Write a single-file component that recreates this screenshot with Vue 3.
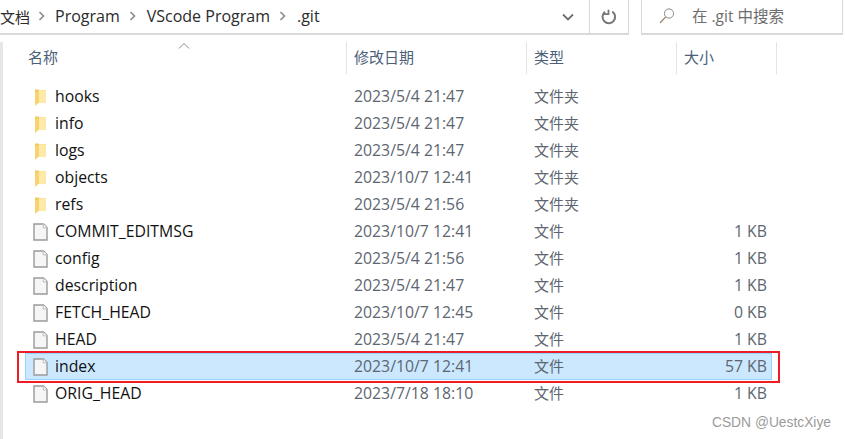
<script setup>
const rows = [
  { n: 'hooks', d: '2023/5/4 21:47', t: '文件夹', s: '', f: 1 },
  { n: 'info', d: '2023/5/4 21:47', t: '文件夹', s: '', f: 1 },
  { n: 'logs', d: '2023/5/4 21:47', t: '文件夹', s: '', f: 1 },
  { n: 'objects', d: '2023/10/7 12:41', t: '文件夹', s: '', f: 1 },
  { n: 'refs', d: '2023/5/4 21:56', t: '文件夹', s: '', f: 1 },
  { n: 'COMMIT_EDITMSG', d: '2023/10/7 12:41', t: '文件', s: '1 KB' },
  { n: 'config', d: '2023/5/4 21:56', t: '文件', s: '1 KB' },
  { n: 'description', d: '2023/5/4 21:47', t: '文件', s: '1 KB' },
  { n: 'FETCH_HEAD', d: '2023/10/7 12:45', t: '文件', s: '0 KB' },
  { n: 'HEAD', d: '2023/5/4 21:47', t: '文件', s: '1 KB' },
  { n: 'index', d: '2023/10/7 12:41', t: '文件', s: '57 KB', sel: 1 },
  { n: 'ORIG_HEAD', d: '2023/7/18 18:10', t: '文件', s: '1 KB' },
]
const crumbs = ['Program', 'VScode Program', '.git']
</script>

<template>
  <div class="win">
    <div class="top">
      <div class="addr">
        <div class="crumbs">
          <span class="first">文档</span>
          <template v-for="c in crumbs" :key="c">
            <svg class="chev" width="8" height="10" viewBox="0 0 8 10"><path d="M1.5 1l4 4-4 4" fill="none" stroke="#8a8a8a" stroke-width="1.6"/></svg>
            <span>{{ c }}</span>
          </template>
        </div>
        <div class="drop">
          <svg width="12" height="8" viewBox="0 0 12 8"><path d="M1 1.5l5 5 5-5" fill="none" stroke="#6d6d6d" stroke-width="1.8"/></svg>
        </div>
        <div class="refresh">
          <svg width="16" height="16" viewBox="0 0 16 16"><path d="M11.2 2.6A6.3 6.3 0 1 1 4 2.9" fill="none" stroke="#777" stroke-width="2"/><path d="M3 .6h4.4v4.6" fill="none" stroke="#777" stroke-width="1.8" transform="rotate(90 5.2 2.9)"/></svg>
        </div>
      </div>
      <div class="search">
        <svg width="16" height="16" viewBox="0 0 16 16"><circle cx="10" cy="5.5" r="4.6" fill="none" stroke="#8a8a8a" stroke-width="1"/><path d="M6.6 9L1 15" fill="none" stroke="#a08a6a" stroke-width="1.2"/></svg>
        <span>在 .git 中搜索</span>
      </div>
    </div>

    <div class="body">
      <div class="head">
        <div class="hc name">名称<svg class="sort" width="12" height="6" viewBox="0 0 12 6"><path d="M1 5.5l5-5 5 5" fill="none" stroke="#8a8a8a" stroke-width="1"/></svg></div>
        <div class="hc">修改日期</div>
        <div class="hc">类型</div>
        <div class="hc">大小</div>
      </div>
      <div class="list">
        <div v-for="r in rows" :key="r.n" class="row" :class="{ sel: r.sel }">
          <div class="icon">
            <svg v-if="r.f" width="13" height="18" viewBox="0 0 13 18">
              <path d="M1 2h11v13H1z" fill="#fbe39a"/>
              <path d="M1 1.5h3.6l.5 1V13l-4 .8L1 14z" fill="#f2c95f"/>
              <path d="M1 4.5L5 3v11.5L1.5 17.5H1z" fill="#f7d46f"/>
              <path d="M5 3h7v12H5z" fill="#fdeaa8"/>
            </svg>
            <svg v-else width="15" height="18" viewBox="0 0 15 18">
              <path d="M1 1h9.5L14 4.5V17H1z" fill="#f6f6f6" stroke="#9a9a9a" stroke-width="1.4"/>
              <path d="M10.2 1v3.8H14" fill="#fff" stroke="#b8b8b8"/>
            </svg>
          </div>
          <div class="n">{{ r.n }}</div>
          <div class="d">{{ r.d }}</div>
          <div class="t">{{ r.t }}</div>
          <div class="s">{{ r.s }}</div>
          <div v-if="r.sel" class="mark"></div>
        </div>
      </div>
    </div>
    <div class="wm">CSDN @UestcXiye</div>
  </div>
</template>

<style scoped>
.win {
  position: relative;
  width: 845px;
  height: 439px;
  background: #fff;
  overflow: hidden;
  font-family: "Open Sans", "Noto Sans CJK SC", sans-serif;
  font-size: 15.8px;
  color: #1a1a1a;
}
.top {
  display: flex;
  height: 35px;
  gap: 12px;
  padding-right: 2px;
}
.addr {
  display: flex;
  align-items: center;
  width: 629px;
  border-right: 1px solid #d9d9d9;
  border-bottom: 2px solid #d9d9d9;
  box-sizing: border-box;
}
.crumbs {
  flex: 1;
  display: flex;
  align-items: center;
  gap: 9.5px;
  font-size: 16px;
  color: #2b2b2b;
  height: 30px;
  margin-top: -1px;
}
.first { font-size: 15px; width: 28px; white-space: nowrap; }
.drop {
  width: 40px;
  height: 33px;
  display: flex;
  align-items: center;
  justify-content: center;
  box-sizing: border-box;
  padding-right: 4px;
  border-right: 1px solid #d9d9d9;
}
.refresh {
  width: 38px;
  height: 33px;
  display: flex;
  align-items: center;
  justify-content: center;
}
.search {
  flex: 1;
  display: flex;
  align-items: center;
  gap: 17px;
  padding-left: 17px;
  padding-bottom: 2px;
  border-left: 1px solid #d9d9d9;
  border-right: 1px solid #d9d9d9;
  border-bottom: 2px solid #d9d9d9;
  color: #6d6d6d;
  font-size: 15.5px;
  box-sizing: border-box;
}
.body {
  margin-top: 7px;
  height: 397px;
  border-left: 3px solid #e6e6e6;
  box-sizing: border-box;
}
.head {
  display: grid;
  grid-template-columns: 344px 180px 150px 100px;
  height: 32px;
  margin-bottom: 9px;
}
.hc {
  position: relative;
  display: flex;
  align-items: center;
  padding-left: 7px;
  padding-bottom: 3px;
  border-right: 1px solid #e3e3e3;
  color: #4c607a;
  font-size: 15px;
  box-sizing: border-box;
}
.name { padding-left: 25px; }
.sort { position: absolute; left: 175px; top: 1px; }
.list { padding-left: 22px; width: 747px; }
.row {
  position: relative;
  display: grid;
  grid-template-columns: 30px 299px 180px 150px 88px;
  align-items: center;
  height: 27px;
  line-height: 25px;
}
.icon { display: flex; justify-content: center; margin-top: 1px; }
.n { color: #111; }
.d, .t, .s { color: #5d6670; }
.t { font-size: 15px; }
.s { text-align: right; padding-right: 5px; }
.sel {
  background: #cce8ff;
  box-shadow: inset 0 0 0 1px #99d1ff;
}
.mark {
  position: absolute;
  left: -8px;
  right: -8px;
  top: -2px;
  bottom: -3px;
  border: 2px solid #ee1c25;
  pointer-events: none;
}
.wm {
  position: absolute;
  right: 14px;
  bottom: 9px;
  font-size: 13.8px;
  color: #9b9b9b;
  font-family: "Liberation Sans", sans-serif;
}
</style>
